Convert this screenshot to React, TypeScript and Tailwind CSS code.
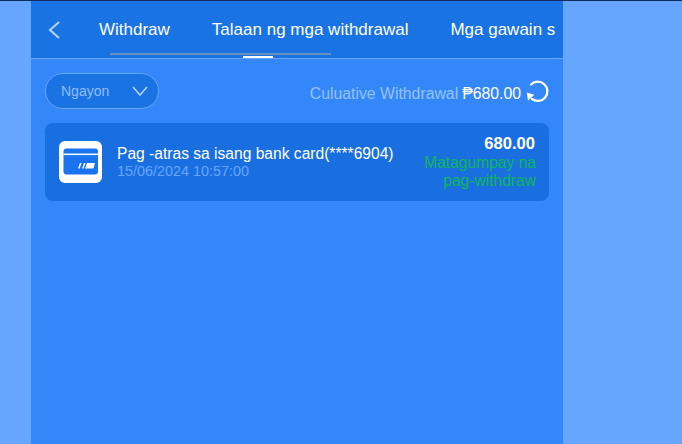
const tabs = ["Withdraw", "Talaan ng mga withdrawal", "Mga gawain s"];

function CardIcon() {
  return (
    <svg viewBox="0 0 43 42" className="w-[43px] h-[42px] shrink-0">
      <rect width="43" height="42" rx="6" fill="#ffffff" />
      <rect x="4.5" y="7.5" width="34.5" height="26" rx="3" fill="#1a73f0" />
      <rect x="4.5" y="12.5" width="34.5" height="1.6" fill="#ffffff" />
      <path d="M19 27.5l2-5.5h1.6l-2 5.5zM23 27.5l2-5.5h1.6l-2 5.5z" fill="#ffffff" />
      <path d="M28 22h8l-1.6 5.5H26z" fill="#ffffff" />
    </svg>
  );
}

function RefreshIcon() {
  return (
    <svg viewBox="0 0 24 24" className="w-[24px] h-[24px] ml-[4px] -mt-[2px]" fill="none">
      <path d="M6 5.5A9.6 9.6 0 1 1 7 20" stroke="#ffffff" strokeWidth="2.3" strokeLinecap="round" />
      <path d="M1.8 13.5l7.4 2.2-6.2 6z" fill="#ffffff" />
    </svg>
  );
}

export default function App() {
  return (
    <div className="w-[682px] h-[444px] overflow-hidden bg-[#66a6ff] border-t border-[#0f2a5c] font-['Liberation_Sans',Arial,sans-serif]">
      <div className="ml-[31px] w-[532px] h-[443px] bg-[#3387f9]">
        {/* Tabs */}
        <div className="relative h-[58px] bg-[#1a73e3] border-b border-[#66a6ff] flex items-start overflow-hidden">
          <svg viewBox="0 0 14 20" className="w-[14px] h-[20px] ml-[16px] mt-[19px] shrink-0" fill="none">
            <path d="M12 2L3 10l9 8" stroke="#b5d4ff" strokeWidth="2" />
          </svg>
          <div className="flex gap-[42px] ml-[38px] mt-[19px] whitespace-nowrap text-white text-[17px] leading-[20px]">
            {tabs.map((t) => (
              <span key={t}>{t}</span>
            ))}
          </div>
          <div className="absolute left-[79px] top-[52px] w-[221px] h-[2px] bg-[#6d8fbf]" />
          <div className="absolute left-[212px] top-[55px] w-[30px] h-[2px] bg-white" />
        </div>

        <div className="px-[14px]">
          {/* Filter row */}
          <div className="flex items-center justify-between mt-[14px]">
            <div className="w-[114px] h-[36px] rounded-full bg-[#1a73e3] border border-[#66a6ff] flex items-center justify-between pl-[15px] pr-[10px]">
              <span className="text-[14px] text-[#8fbfff]">Ngayon</span>
              <svg viewBox="0 0 16 10" className="w-[16px] h-[10px]" fill="none">
                <path d="M1 1l7 8 7-8" stroke="#b5d4ff" strokeWidth="1.5" />
              </svg>
            </div>
            <div className="flex items-center text-[15.8px] mt-[1px]">
              <span className="text-[#93c2ff] mt-[4px]">Culuative Withdrawal</span>
              <span className="text-white ml-[4px] mt-[4px]">₱680.00</span>
              <RefreshIcon />
            </div>
          </div>

          {/* Record */}
          <div className="mt-[14px] h-[78px] rounded-[8px] bg-[#1a6fe0] flex items-center pl-[14px] pr-[13px]">
            <CardIcon />
            <div className="ml-[15px] flex-1 min-w-0">
              <p className="text-white text-[15.6px] leading-[18px] whitespace-nowrap">Pag -atras sa isang bank card(****6904)</p>
              <p className="text-[#66a6ff] text-[14.4px] leading-[16px]">15/06/2024 10:57:00</p>
            </div>
            <div className="w-[130px] text-right">
              <p className="text-white font-bold text-[16.6px] leading-[20px] mr-[1px]">680.00</p>
              <p className="text-[#0fb85a] text-[15.6px] leading-[18px]">Matagumpay na pag-withdraw</p>
            </div>
          </div>
        </div>
      </div>
    </div>
  );
}
